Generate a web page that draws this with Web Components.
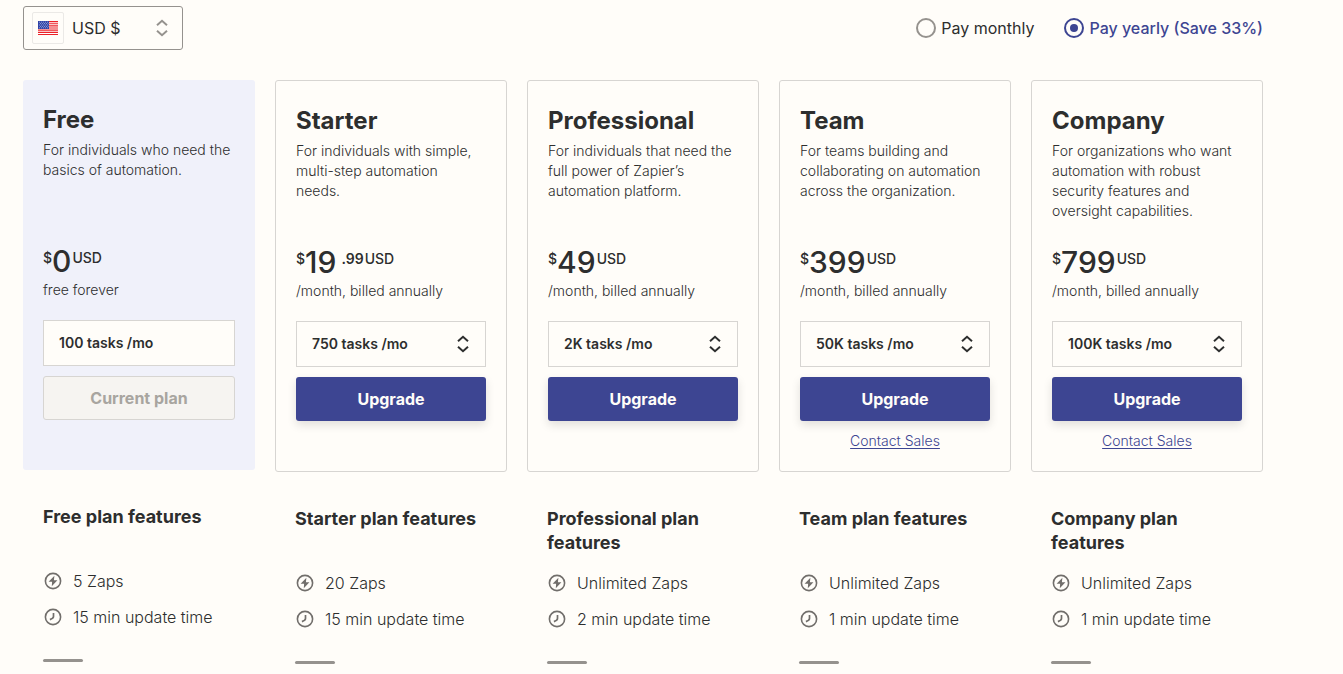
<!DOCTYPE html>
<html lang="en">
<head>
<meta charset="utf-8">
<meta name="viewport" content="width=device-width, initial-scale=1">
<title>Plans and pricing</title>
<style>
  body {
    margin: 0;
    background: #fffdf9;
    color: #2d2e2e;
    font-family: Inter, "Liberation Sans", sans-serif;
    font-size: 14px;
    line-height: 20px;
    --accent: #3d4592;
    --surface: #fffdf9;
    --line: #d7d5d2;
    --muted: #95928e;
  }
</style>
</head>
<body>
<pricing-page>
  <currency-picker slot="currency"></currency-picker>
  <billing-toggle slot="billing"></billing-toggle>

  <plan-column name="Free" amount="0" period="free forever" tasks="100 tasks /mo" current>
    For individuals who need the basics of automation.
    <feature-item slot="features" icon="zap">5 Zaps</feature-item>
    <feature-item slot="features" icon="clock">15 min update time</feature-item>
  </plan-column>
  <plan-column name="Starter" amount="19" cents=".99" period="/month, billed annually" tasks="750 tasks /mo">
    For individuals with simple, multi-step automation needs.
    <feature-item slot="features" icon="zap">20 Zaps</feature-item>
    <feature-item slot="features" icon="clock">15 min update time</feature-item>
  </plan-column>
  <plan-column name="Professional" amount="49" period="/month, billed annually" tasks="2K tasks /mo">
    For individuals that need the full power of Zapier’s automation platform.
    <feature-item slot="features" icon="zap">Unlimited Zaps</feature-item>
    <feature-item slot="features" icon="clock">2 min update time</feature-item>
  </plan-column>
  <plan-column name="Team" amount="399" period="/month, billed annually" tasks="50K tasks /mo" contact>
    For teams building and collaborating on automation across the organization.
    <feature-item slot="features" icon="zap">Unlimited Zaps</feature-item>
    <feature-item slot="features" icon="clock">1 min update time</feature-item>
  </plan-column>
  <plan-column name="Company" amount="799" period="/month, billed annually" tasks="100K tasks /mo" contact>
    For organizations who want automation with robust security features and oversight capabilities.
    <feature-item slot="features" icon="zap">Unlimited Zaps</feature-item>
    <feature-item slot="features" icon="clock">1 min update time</feature-item>
  </plan-column>
</pricing-page>

<script>
  class BaseElement extends HTMLElement {
    connectedCallback() {
      if (this.shadowRoot) return;
      this.attachShadow({ mode: "open" }).innerHTML = this.render();
    }
  }

  const chevrons = `
    <svg class="chevrons" width="12" height="18" viewBox="0 0 12 18" fill="none"
      stroke="currentColor" stroke-width="2" aria-hidden="true">
      <path d="M1 6.2 6 1.8l5 4.4M1 11.8l5 4.4 5-4.4"/>
    </svg>`;

  customElements.define("pricing-page", class extends BaseElement {
    render() {
      return `
        <style>
          :host { display: block; padding: 6px 80px 6px 23px; }
          header { display: flex; flex-wrap: wrap; align-items: center; justify-content: space-between; margin-bottom: 30px; }
          main { display: grid; grid-template-columns: repeat(auto-fit, minmax(200px, 1fr)); gap: 20px; align-items: start; }
        </style>
        <header><slot name="currency"></slot><slot name="billing"></slot></header>
        <main><slot></slot></main>`;
    }
  });

  customElements.define("currency-picker", class extends BaseElement {
    render() {
      return `
        <style>
          :host { display: block; width: 160px; }
          .box { display: grid; align-items: center; }
          .box > * { grid-area: 1 / 1; }
          select {
            appearance: none; box-sizing: border-box; width: 100%; height: 44px; margin: 0;
            padding: 0 32px 0 48px; border: 1px solid var(--muted); border-radius: 3px;
            background: var(--surface); color: inherit; font: 400 16px/24px Inter, "Liberation Sans", sans-serif;
          }
          .flag {
            display: grid; place-items: center; box-sizing: border-box; width: 32px; height: 32px;
            margin-left: 9px; border: 1px solid #ebe9e6; border-radius: 2px; pointer-events: none;
          }
          .chevrons { justify-self: end; margin-right: 15px; color: var(--muted); pointer-events: none; }
        </style>
        <div class="box">
          <select aria-label="Currency"><option>USD $</option></select>
          <span class="flag">
            <svg width="20" height="14" viewBox="0 0 20 14" aria-hidden="true">
              <rect width="20" height="14" fill="#fff"/>
              <path stroke="#ec2027" stroke-width="1.15" d="M0 .55h20M0 2.7h20M0 4.85h20M0 7h20M0 9.15h20M0 11.3h20M0 13.45h20"/>
              <rect width="11" height="8" fill="#2f43a8"/>
              <path stroke="#fff" stroke-opacity=".75" stroke-width=".8" stroke-dasharray=".8 1.2" d="M1 1.2h9.5M2 2.6h8.5M1 4h9.5M2 5.4h8.5M1 6.8h9.5"/>
            </svg>
          </span>
          ${chevrons}
        </div>`;
    }
  });

  customElements.define("billing-toggle", class extends BaseElement {
    render() {
      return `
        <style>
          :host { display: block; font-size: 16px; line-height: 24px; }
          fieldset { display: flex; gap: 30px; margin: 0; padding: 0; border: 0; }
          label { display: flex; align-items: center; gap: 5px; }
          input {
            appearance: none; display: grid; place-items: center; box-sizing: border-box;
            width: 20px; height: 20px; margin: 0; border: 2px solid var(--muted); border-radius: 50%;
          }
          input:checked { border-color: var(--accent); }
          input:checked::before { content: ""; width: 8px; height: 8px; border-radius: 50%; background: var(--accent); }
          label:has(:checked) { color: var(--accent); font-weight: 500; }
        </style>
        <fieldset aria-label="Billing period">
          <label><input type="radio" name="billing" value="monthly">Pay monthly</label>
          <label><input type="radio" name="billing" value="yearly" checked>Pay yearly (Save 33%)</label>
        </fieldset>`;
    }
  });

  customElements.define("plan-column", class extends BaseElement {
    render() {
      const get = (key) => this.getAttribute(key) || "";
      const current = this.hasAttribute("current");
      const name = get("name");
      return `
        <style>
          :host { display: block; }
          .card { padding: 24px 20px 20px; border: 1px solid var(--line); border-radius: 3px; }
          .card.current { border: 0; background: #f0f1fa; }
          h2 { margin: 0 0 4px; font-size: 24px; line-height: 32px; font-weight: 700; }
          .about { min-height: 80px; margin: 0 0 24px; padding-right: 3px; font-weight: 300; }
          .price { display: flex; align-items: flex-start; height: 36px; font-weight: 500; }
          .price span { padding-top: 4px; }
          .price strong { font-size: 30px; line-height: 34px; font-weight: 500; }
          .price .cents { font-weight: 600; padding-left: 5px; }
          .price .unit { padding-left: 1px; }
          .period { margin: 0 0 20px; font-weight: 300; }
          .tasks { display: grid; align-items: center; margin-bottom: 10px; }
          .tasks > * { grid-area: 1 / 1; }
          select, .fixed {
            appearance: none; box-sizing: border-box; width: 100%; height: 46px; margin: 0; padding: 0 15px;
            border: 1px solid var(--line); border-radius: 0; background: var(--surface); color: inherit;
            font: 600 14px/20px Inter, "Liberation Sans", sans-serif;
          }
          .fixed { display: flex; align-items: center; }
          .chevrons { justify-self: end; margin-right: 17px; pointer-events: none; }
          button {
            display: block; box-sizing: border-box; width: 100%; height: 44px; padding: 0; border: 0; border-radius: 3px;
            background: var(--accent); color: var(--surface); box-shadow: 0 4px 10px rgba(0, 0, 0, .12);
            font: 700 16px/24px Inter, "Liberation Sans", sans-serif;
          }
          button:disabled { border: 1px solid var(--line); background: #f6f4f1; color: #a8a5a0; box-shadow: none; }
          .more { height: 20px; margin: 10px 0 0; text-align: center; font-weight: 300; }
          a { color: var(--accent); text-underline-offset: 2px; }
          .features { padding: 35px 20px 0; }
          h3 { min-height: 48px; margin: 0 0 16px; font-size: 18px; line-height: 24px; font-weight: 700; }
          .list { display: grid; gap: 12px; }
          hr { width: 40px; height: 3px; margin: 30px 0 0; border: 0; border-radius: 2px; background: var(--muted); }
        </style>
        <section class="card ${current ? "current" : ""}">
          <h2>${name}</h2>
          <p class="about"><slot></slot></p>
          <div class="price"><span>$</span><strong>${get("amount")}</strong>${get("cents") ? `<span class="cents">${get("cents")}</span>` : ""}<span class="unit">USD</span></div>
          <p class="period">${get("period")}</p>
          <div class="tasks">${current
            ? `<div class="fixed">${get("tasks")}</div>`
            : `<select aria-label="${name} tasks per month"><option>${get("tasks")}</option></select>${chevrons}`}</div>
          <button type="button" ${current ? "disabled" : ""}>${current ? "Current plan" : "Upgrade"}</button>
          <p class="more">${this.hasAttribute("contact") ? `<a href="#contact">Contact Sales</a>` : ""}</p>
        </section>
        <section class="features">
          <h3>${name} plan features</h3>
          <div class="list" role="list"><slot name="features"></slot></div>
          <hr>
        </section>`;
    }
  });

  const featureIcons = {
    zap: `<path fill="currentColor" d="M11.4 4.8 5.6 10.8h3.5L8.8 15.2l5.6-6h-3.5z"/>`,
    clock: `<path fill="none" stroke="currentColor" stroke-width="1.7" d="M10.5 6v3.6c0 1.4-1.2 2.2-3.6 3"/>`
  };

  customElements.define("feature-item", class extends BaseElement {
    connectedCallback() {
      super.connectedCallback();
      this.setAttribute("role", "listitem");
    }
    render() {
      return `
        <style>
          :host { display: flex; align-items: center; gap: 10px; font-size: 16px; line-height: 24px; font-weight: 300; }
          svg { flex: none; color: #716e6b; }
        </style>
        <svg width="20" height="20" viewBox="0 0 20 20" aria-hidden="true">
          <circle cx="10" cy="10" r="7.6" fill="none" stroke="currentColor" stroke-width="1.6"/>
          ${featureIcons[this.getAttribute("icon")]}
        </svg>
        <span><slot></slot></span>`;
    }
  });
</script>
</body>
</html>
